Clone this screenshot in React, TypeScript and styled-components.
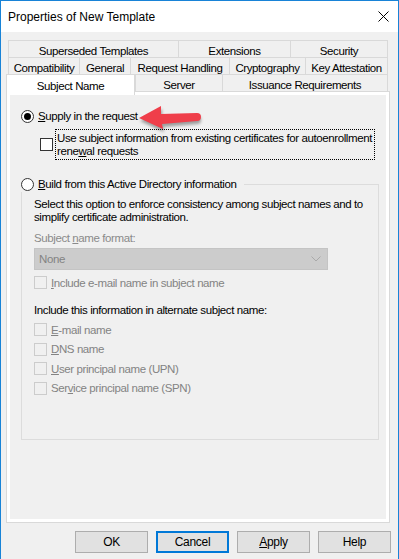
import React from 'react';
import { styled, createGlobalStyle } from 'styled-components';

const GlobalStyle = createGlobalStyle`
  * { box-sizing: border-box; }
  html, body { margin: 0; padding: 0; background: #f0f0f0; }
  body {
    font-family: 'Liberation Sans', Arial, sans-serif;
    font-size: 11.5px;
    letter-spacing: -0.4px;
    color: #000;
  }
`;

interface TabDef {
  label: string;
  width: number;
  active?: boolean;
}

const tabRows: TabDef[][] = [
  [
    { label: 'Superseded Templates', width: 170 },
    { label: 'Extensions', width: 112 },
    { label: 'Security', width: 98 },
  ],
  [
    { label: 'Compatibility', width: 71 },
    { label: 'General', width: 51 },
    { label: 'Request Handling', width: 99 },
    { label: 'Cryptography', width: 76 },
    { label: 'Key Attestation', width: 83 },
  ],
  [
    { label: 'Subject Name', width: 127, active: true },
    { label: 'Server', width: 87 },
    { label: 'Issuance Requirements', width: 166 },
  ],
];

const Arrow = () => (
  <Styled.ArrowSvg width="76" height="34" viewBox="0 0 76 34">
    <defs>
      <filter id="arrowShadow" x="-20%" y="-30%" width="140%" height="160%">
        <feGaussianBlur stdDeviation="1.5" />
      </filter>
    </defs>
    <path
      d="M9,20 L31,8 L31,16 L66,15 A4,4 0 0 1 66,23 L32,26 L33,31 Z"
      fill="rgba(0,0,0,0.35)"
      filter="url(#arrowShadow)"
    />
    <path
      d="M8,17 L30,5 L30,13 L66,12 A4,4 0 0 1 66,20 L31,23 L32,28 Z"
      fill="#ef3e4a"
    />
  </Styled.ArrowSvg>
);

const App = () => {
  return (
    <>
      <GlobalStyle />
      <Styled.Window>
        <Styled.TitleBar>
          <Styled.Title>Properties of New Template</Styled.Title>
          <svg width="11" height="11" viewBox="0 0 11 11">
            <path d="M0.5,0.5 L10.5,10.5 M10.5,0.5 L0.5,10.5" stroke="#000" strokeWidth="1" />
          </svg>
        </Styled.TitleBar>

        <Styled.Body>
          <Styled.TabStrip>
            {tabRows.map((row, i) => (
              <Styled.TabRow key={i}>
                {row.map((tab) => (
                  <Styled.Tab key={tab.label} $width={tab.width} $active={tab.active}>
                    {tab.label}
                  </Styled.Tab>
                ))}
              </Styled.TabRow>
            ))}
          </Styled.TabStrip>

          <Styled.Panel>
            <Arrow />
            <Styled.OptionRow>
              <Styled.Radio $checked />
              <span>
                <u>S</u>upply in the request
              </span>
            </Styled.OptionRow>

            <Styled.RenewalRow>
              <Styled.Check />
              <Styled.FocusLabel>
                Use subject information from existing certificates for autoenrollment
                <br />
                rene<u>w</u>al requests
              </Styled.FocusLabel>
            </Styled.RenewalRow>

            <Styled.Group>
              <Styled.Legend>
                <Styled.OptionRow>
                  <Styled.Radio />
                  <span>
                    <u>B</u>uild from this Active Directory information
                  </span>
                </Styled.OptionRow>
              </Styled.Legend>

              <Styled.Description>
                Select this option to enforce consistency among subject names and to
                <br />
                simplify certificate administration.
              </Styled.Description>

              <Styled.FieldLabel $disabled>
                Subject <u>n</u>ame format:
              </Styled.FieldLabel>
              <Styled.Select>
                <span>None</span>
                <svg width="10" height="6" viewBox="0 0 10 6">
                  <path d="M0.5,0.5 L5,5 L9.5,0.5" stroke="#a9a9a9" fill="none" />
                </svg>
              </Styled.Select>

              <Styled.CheckRow $disabled>
                <Styled.Check $disabled />
                <span>
                  <u>I</u>nclude e-mail name in subject name
                </span>
              </Styled.CheckRow>

              <Styled.FieldLabel $gap={15}>
                Include this information in alternate subject name:
              </Styled.FieldLabel>
              <Styled.CheckList>
                <Styled.CheckRow $disabled>
                  <Styled.Check $disabled />
                  <span>
                    <u>E</u>-mail name
                  </span>
                </Styled.CheckRow>
                <Styled.CheckRow $disabled>
                  <Styled.Check $disabled />
                  <span>
                    <u>D</u>NS name
                  </span>
                </Styled.CheckRow>
                <Styled.CheckRow $disabled>
                  <Styled.Check $disabled />
                  <span>
                    <u>U</u>ser principal name (UPN)
                  </span>
                </Styled.CheckRow>
                <Styled.CheckRow $disabled>
                  <Styled.Check $disabled />
                  <span>
                    Ser<u>v</u>ice principal name (SPN)
                  </span>
                </Styled.CheckRow>
              </Styled.CheckList>
            </Styled.Group>
          </Styled.Panel>

          <Styled.ButtonRow>
            <Styled.Button>OK</Styled.Button>
            <Styled.Button $default>Cancel</Styled.Button>
            <Styled.Button>
              <u>A</u>pply
            </Styled.Button>
            <Styled.Button>Help</Styled.Button>
          </Styled.ButtonRow>
        </Styled.Body>
      </Styled.Window>
    </>
  );
};

export default App;

const Styled = {
  Window: styled.div`
    width: 399px;
    height: 559px;
    border: 1px solid #1883d7;
    border-bottom: none;
    background: #f0f0f0;
    overflow: hidden;
  `,
  TitleBar: styled.div`
    height: 31px;
    background: #fff;
    display: flex;
    align-items: center;
    justify-content: space-between;
    padding: 0 9px 0 7px;
  `,
  Title: styled.span`
    font-size: 12px;
    letter-spacing: 0;
  `,
  Body: styled.div`
    padding: 8px 8px 0 5px;
  `,
  TabStrip: styled.div`
    margin-left: 2px;
  `,
  TabRow: styled.div`
    display: flex;
    height: 17px;
    align-items: flex-start;
  `,
  Tab: styled.div<{ $width: number; $active?: boolean }>`
    width: ${(p) => (p.$active ? p.$width + 2 : p.$width)}px;
    height: ${(p) => (p.$active ? 21 : 17)}px;
    display: flex;
    align-items: center;
    justify-content: center;
    padding-top: ${(p) => (p.$active ? 1 : 4)}px;
    border-top: 1px solid #d9d9d9;
    border-left: 1px solid #d9d9d9;
    border-right: ${(p) => (p.$active ? '1px solid #d9d9d9' : 'none')};
    background: ${(p) => (p.$active ? '#fff' : '#f0f0f0')};
    white-space: nowrap;
    position: ${(p) => (p.$active ? 'relative' : 'static')};
    z-index: ${(p) => (p.$active ? 2 : 'auto')};
    margin-left: ${(p) => (p.$active ? -2 : 0)}px;

    &:last-child {
      border-right: 1px solid #d9d9d9;
    }
  `,
  Panel: styled.div`
    position: relative;
    height: 432px;
    border: 1px solid #d9d9d9;
    box-shadow: inset 0 0 0 3px #fff;
    padding: 17px 0 0 14px;
  `,
  ArrowSvg: styled.svg`
    position: absolute;
    left: 124px;
    top: 9px;
  `,
  OptionRow: styled.div`
    display: flex;
    align-items: center;
    gap: 4px;
    height: 15px;
    line-height: 15px;
  `,
  Radio: styled.span<{ $checked?: boolean }>`
    width: 13px;
    height: 13px;
    border-radius: 50%;
    border: 1px solid #333;
    background: #fff;
    flex: none;
    display: flex;
    align-items: center;
    justify-content: center;

    &::after {
      content: '';
      width: 7px;
      height: 7px;
      border-radius: 50%;
      background: ${(p) => (p.$checked ? '#000' : 'transparent')};
    }
  `,
  RenewalRow: styled.div`
    display: flex;
    align-items: center;
    margin: 5px 0 0 19px;
    gap: 1px;
  `,
  Check: styled.span<{ $disabled?: boolean }>`
    width: 13px;
    height: 13px;
    flex: none;
    border: 1px solid ${(p) => (p.$disabled ? '#cccccc' : '#333')};
    background: ${(p) => (p.$disabled ? 'transparent' : '#fff')};
  `,
  FocusLabel: styled.div`
    border: 1px dotted #000;
    padding: 2px 2px 1px 1px;
    line-height: 13px;
    margin-left: 1px;
    white-space: nowrap;
  `,
  Group: styled.fieldset`
    margin: 17px 0 0 0;
    padding: 0 0 44px 12px;
    width: 358px;
    border: 1px solid #dcdcdc;
  `,
  Legend: styled.legend`
    padding: 0 8px 0 0;
    margin-left: -13px;
  `,
  Description: styled.div`
    margin-top: 6px;
    line-height: 13px;
    white-space: nowrap;
  `,
  FieldLabel: styled.div<{ $disabled?: boolean; $gap?: number }>`
    margin-top: ${(p) => p.$gap ?? 8}px;
    line-height: 13px;
    color: ${(p) => (p.$disabled ? '#8a8a8a' : '#000')};
  `,
  Select: styled.div`
    margin-top: 3px;
    width: 294px;
    height: 22px;
    background: #cccccc;
    border: 1px solid #c4c4c4;
    color: #838383;
    display: flex;
    align-items: center;
    justify-content: space-between;
    padding: 0 6px 0 4px;
  `,
  CheckRow: styled.div<{ $disabled?: boolean }>`
    display: flex;
    align-items: center;
    gap: 4px;
    height: 13px;
    margin-top: 6px;
    color: ${(p) => (p.$disabled ? '#838383' : '#000')};
  `,
  CheckList: styled.div`
    display: flex;
    flex-direction: column;
    gap: 0.5px;
  `,
  ButtonRow: styled.div`
    display: flex;
    justify-content: flex-end;
    gap: 8px;
    padding-top: 8px;
    margin-right: -1px;
  `,
  Button: styled.button<{ $default?: boolean }>`
    width: 73px;
    height: 22px;
    font-family: 'Liberation Sans', Arial, sans-serif;
    font-size: 12px;
    letter-spacing: -0.3px;
    color: #000;
    background: #e1e1e1;
    border: ${(p) => (p.$default ? '2px solid #0078d7' : '1px solid #adadad')};
    padding: 0;
  `,
};
